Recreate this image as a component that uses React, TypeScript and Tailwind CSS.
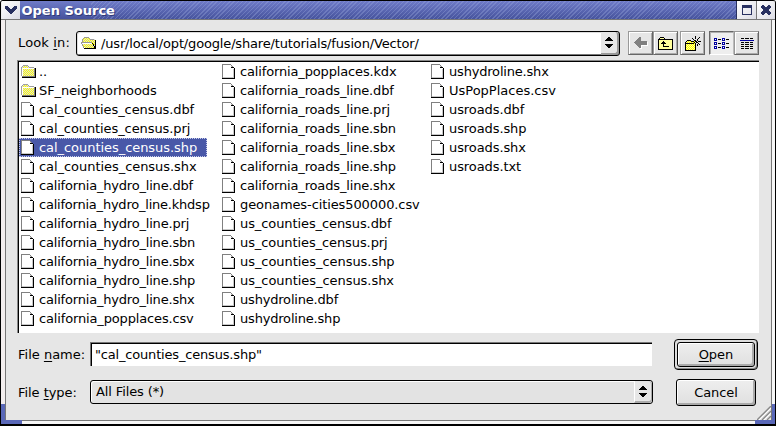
import React from "react";

const columns: string[][] = [
  ["..", "SF_neighborhoods", "cal_counties_census.dbf", "cal_counties_census.prj", "cal_counties_census.shp", "cal_counties_census.shx", "california_hydro_line.dbf", "california_hydro_line.khdsp", "california_hydro_line.prj", "california_hydro_line.sbn", "california_hydro_line.sbx", "california_hydro_line.shp", "california_hydro_line.shx", "california_popplaces.csv"],
  ["california_popplaces.kdx", "california_roads_line.dbf", "california_roads_line.prj", "california_roads_line.sbn", "california_roads_line.sbx", "california_roads_line.shp", "california_roads_line.shx", "geonames-cities500000.csv", "us_counties_census.dbf", "us_counties_census.prj", "us_counties_census.shp", "us_counties_census.shx", "ushydroline.dbf", "ushydroline.shp"],
  ["ushydroline.shx", "UsPopPlaces.csv", "usroads.dbf", "usroads.shp", "usroads.shx", "usroads.txt"],
];
const columnWidths = ["w-[201px]", "w-[209px]", "w-[200px]"];
const folders = ["..", "SF_neighborhoods"];
const selected = "cal_counties_census.shp";

function tracking(name: string) {
  if (name.startsWith("UsPop")) return "tracking-normal";
  if (/census\.sh/.test(name)) return "tracking-[-0.05px]";
  if (/census|SF_|usroads/.test(name)) return "tracking-[-0.09px]";
  if (name.startsWith("geonames")) return "tracking-[-0.1px]";
  if (/roads_line|popplaces/.test(name)) return "tracking-[-0.15px]";
  if (name.endsWith("khdsp")) return "tracking-[-0.22px]";
  return "tracking-[-0.19px]";
}

function Dither({ id, light = "#dcdcdc" }: { id: string; light?: string }) {
  return (
    <pattern id={id} width="2" height="2" patternUnits="userSpaceOnUse">
      <rect width="2" height="2" fill="#ffff00" />
      <rect x="1" width="1" height="1" fill={light} />
      <rect y="1" width="1" height="1" fill={light} />
    </pattern>
  );
}

function Folder({ id }: { id: string }) {
  return (
    <svg width="15" height="13" shapeRendering="crispEdges" className="block shrink-0">
      <defs><Dither id={id} /></defs>
      <path d="M1 2h1V1h5v1h6v9H1z" fill={`url(#${id})`} />
      <path d="M0 2h1v9H0zM1 1h1v1H1zM2 0h5v1H2zM7 1h1v1H7zM8 2h5v1H8z" fill="#a0a0a0" />
      <path d="M1 3h1v8H1zM2 3h11v1H2z" fill="#fff" />
      <path d="M13 3h1v9h-1zM1 11h13v1H1z" fill="#808080" />
      <path d="M14 3h1v10h-1zM1 12h14v1H1z" fill="#000" />
    </svg>
  );
}

function OpenFolder() {
  return (
    <svg width="16" height="13" shapeRendering="crispEdges" className="block shrink-0">
      <defs><Dither id="openf" /></defs>
      <path d="M2 2h1V1h5v1h6v9H4L1 7V5h1z" fill="url(#openf)" />
      <path d="M1 2h1v3H1zM2 1h1v1H2zM3 0h5v1H3zM8 1h1v1H8zM9 2h4v1H9zM0 5h11v1H0zM0 6h1v1H0zM1 7h1v2H1zM2 9h1v2H2z" fill="#999" />
      <path d="M1 6h10v1H1z" fill="#fff" />
      <path d="M14 3h1v9h-1zM3 11h12v1H3zM11 6h1v1h-1zM12 7h1v2h-1zM13 9h1v2h-1z" fill="#000" />
    </svg>
  );
}

function Doc() {
  return (
    <svg width="13" height="15" shapeRendering="crispEdges" className="block shrink-0">
      <path d="M1 1h8v3h3v10H1z" fill="#fff" />
      <path d="M0 0h9v1H0zM0 0h1v14H0zM9 1h1v1H9zM10 2h1v1h-1zM11 3h1v1h-1z" fill="#808080" />
      <path d="M11 5h1v9h-1zM1 13h11v1H1zM9 2h1v1H9z" fill="#c8c8c8" />
      <path d="M9 3h3v1H9zM12 4h1v11h-1zM0 14h13v1H0z" fill="#000" />
    </svg>
  );
}

function Arrows() {
  return (
    <svg width="8" height="11" shapeRendering="crispEdges" className="block">
      <path d="M3 0h2v1H3zM2 1h4v1H2zM1 2h6v1H1zM0 3h8v1H0zM0 7h8v1H0zM1 8h6v1H1zM2 9h4v1H2zM3 10h2v1H3z" />
    </svg>
  );
}

function BackIcon() {
  return (
    <svg width="14" height="12" shapeRendering="crispEdges">
      <path d="M1 6h1v1h1v1h1v1h1v1h1v1h1V8h6V5h1v4H8v3H6v-1H5v-1H4V9H3V8H2V7H1z" fill="#fff" />
      <path d="M0 5h1V4h1V3h1V2h1V1h1V0h2v4h6v4H7v3H5v-1H4V9H3V8H2V7H1V6H0z" fill="#808080" />
    </svg>
  );
}

function ParentIcon() {
  return (
    <svg width="15" height="13" shapeRendering="crispEdges">
      <path d="M1 2h1V1h4v1h8v10H1z" fill="#ffff9c" />
      <path d="M0 2h1v11H0zM1 1h1v1H1zM2 0h4v1H2zM6 1h1v1H6zM7 2h8v1H7zM1 2h6v1H1zM14 3h1v10h-1zM1 12h13v1H1z" />
      <path d="M5 4h1v1H5zM4 5h3v1H4zM3 6h5v1H3zM5 7h1v3H5zM5 9h6v1H5z" />
    </svg>
  );
}

function NewFolderIcon() {
  return (
    <svg width="16" height="15" shapeRendering="crispEdges">
      <defs><Dither id="newf" light="#ffff9c" /></defs>
      <path d="M1 5h9v9H1z" fill="url(#newf)" />
      <path d="M0 6h1v8H0zM1 5h1v1H1zM2 4h4v1H2zM6 5h1v1H6zM1 7h8v1H1zM10 9h1v6h-1zM0 14h11v1H0z" />
      <path d="M10 0h1v3h-1zM7 2h1v1H7zM8 3h1v1H8zM14 1h1v1h-1zM13 2h1v1h-1zM12 3h1v2h-1zM9 4h2v1H9zM6 5h3v1H6zM10 5h2v1h-2zM13 5h3v1h-3zM9 6h1v1H9zM11 6h2v1h-2zM8 7h1v1H8zM10 7h1v2h-1zM13 7h1v1h-1zM14 8h1v1h-1zM12 8h1v2h-1z" />
    </svg>
  );
}

function ListIcon() {
  return (
    <svg width="16" height="11" shapeRendering="crispEdges">
      {[0, 4, 8].map((y) => (
        <g key={y} transform={`translate(0 ${y})`}>
          <path d="M0 0h3v3H0zM8 0h3v3H8z" fill="#0000a0" />
          <path d="M1 1h1v1H1zM9 1h1v1H9z" fill="#fff" />
          <path d="M4 1h3v1H4zM12 1h3v1h-3z" />
        </g>
      ))}
    </svg>
  );
}

function DetailIcon() {
  return (
    <svg width="14" height="11" shapeRendering="crispEdges">
      <path d="M1 0h3v1H1zM5 0h4v1H5zM10 0h3v1h-3z" />
      <path d="M0 2h14v1H0z" fill="#0000a0" />
      {[4, 6, 8, 10].map((y) => <path key={y} transform={`translate(0 ${y})`} d="M1 0h3v1H1zM5 0h4v1H5zM10 0h3v1h-3z" />)}
    </svg>
  );
}

function Tool({ children, pressed = false }: { children: React.ReactNode; pressed?: boolean }) {
  return (
    <div className={`flex h-6 w-[25px] items-center justify-center border ${pressed ? "border-t-[#666] border-l-[#666] border-r-[#bbb] border-b-white bg-[#eeeeee] shadow-[inset_1px_1px_0_#b0b0b0]" : "border-t-[#999] border-l-[#999] border-r-[#666] border-b-[#666] bg-[#e6e6e6] shadow-[inset_1px_1px_0_#fff,inset_-1px_-1px_0_#aaa]"}`}>
      {children}
    </div>
  );
}

function Row({ name, index }: { name: string; index: number }) {
  const active = name === selected;
  const isFolder = folders.includes(name);
  return (
    <div className={`flex h-[19px] items-center pl-0.5 ${active ? "w-[188px] bg-[#4958a8] text-white outline-1 -outline-offset-1 outline-dotted outline-[#c8ccea]" : "w-fit"}`}>
      <div className="w-[18px]">{isFolder ? <Folder id={`folder${index}`} /> : <Doc />}</div>
      <span className={tracking(name)}>{name}</span>
    </div>
  );
}

function TitleButton({ children }: { children: React.ReactNode }) {
  return <div className="flex h-[18px] items-center justify-center bg-linear-to-br from-white to-[#dcdce4]">{children}</div>;
}

export default function App() {
  return (
    <div className="relative flex h-[426px] w-[776px] flex-col overflow-hidden rounded-t-[3px] border border-b-2 border-black bg-[#e6e6e6] font-['DejaVu_Sans',sans-serif] text-[13px] leading-[19px] text-black">
      <header className="flex h-[19px] shrink-0 border-b border-[#777] bg-[#eee]">
        <div className="w-[19px] pl-px">
          <TitleButton>
            <svg width="12" height="8" shapeRendering="crispEdges"><path d="M0 0h3v1h1v1h1v1h2V2h1V1h1V0h3v3h-1v1h-1v1H9v1H8v1H7v1H5V7H4V6H3V5H2V4H1V3H0z" fill="#283060" /></svg>
          </TitleButton>
        </div>
        <div className="flex flex-1 bg-linear-to-b from-[#6f7bc8] to-[#46539d] pl-[1.5px]">
          <span className="z-10 font-bold leading-[19px] text-white [text-shadow:1px_1px_0_#303a78]">Open Source</span>
          <div className="-ml-6 flex-1 bg-[repeating-linear-gradient(135deg,transparent_0px,transparent_2px,#9eacde55_2px,#9eacde55_3px)]" />
        </div>
        <div className="w-[39px] border-l border-[#283060] bg-[#777]">
          <div className="grid grid-cols-[19px_18px] gap-px">
            <TitleButton>
              <svg width="10" height="10" shapeRendering="crispEdges"><path fillRule="evenodd" d="M0 0h10v10H0zM1 3v6h8V3z" fill="#283060" /></svg>
            </TitleButton>
            <TitleButton>
              <svg width="10" height="10" shapeRendering="crispEdges"><path d="M1 0h2v1h1v1h2V1h1V0h2v1h1v2H9v1H8v2h1v1h1v2H9v1H7V9H6V8H4v1H3v1H1V9H0V7h1V6h1V4H1V3H0V1h1z" fill="#283060" /></svg>
            </TitleButton>
          </div>
        </div>
      </header>

      <div className="flex flex-1">
        <div className="flex w-[5px] flex-col border-r border-[#777] bg-[#f3eeee]">
          <div className="mt-auto h-4 bg-[#5a68b8]" />
        </div>

        <main className="flex h-[400px] w-[765px] flex-col pl-3 pt-[11px]">
          <div className="flex h-6">
            <span className="w-[58px] pt-0.5 tracking-[0.15px]">Look <span className="underline underline-offset-2">i</span>n:</span>
            <div className="flex h-[25px] w-[544px] items-center rounded-[3px] border border-black bg-white shadow-[inset_1px_1px_0_#ddd,inset_-1px_-1px_0_#777]">
              <span className="pl-1"><OpenFolder /></span>
              <span className="flex-1 pl-[4px] tracking-[-0.16px]">/usr/local/opt/google/share/tutorials/fusion/Vector/</span>
              <div className="flex h-[23px] w-[18px] items-center justify-center rounded-r-sm border-r-2 border-b-2 border-[#999] bg-[#e6e6e6]"><Arrows /></div>
            </div>
            <div className="ml-2 flex">
              <Tool><BackIcon /></Tool><Tool><ParentIcon /></Tool>
              <div className="ml-0.5"><Tool><NewFolderIcon /></Tool></div>
              <div className="ml-1 flex"><Tool pressed><ListIcon /></Tool><Tool><DetailIcon /></Tool></div>
            </div>
          </div>

          <div className="mt-[5px] h-[273px] w-[742px] -ml-px border-l border-t border-[#888] bg-white">
            <div className="flex h-[272px] border-l border-t border-black">
              {columns.map((files, i) => (
                <div key={i} className={`${columnWidths[i]} shrink-0 whitespace-nowrap`}>
                  {files.map((name, j) => <Row key={name} name={name} index={j} />)}
                </div>
              ))}
            </div>
          </div>

          <div className="mt-[6px] flex h-[31px]">
            <span className="w-[72px] pt-[6px]">File <span className="underline underline-offset-2">n</span>ame:</span>
            <div className="mt-[3px] h-6 w-[562px] border-l border-t border-[#777] bg-white">
              <div className="h-[23px] border-l border-t border-black pl-[3px] leading-[21px] tracking-[-0.18px]">&quot;cal_counties_census.shp&quot;</div>
            </div>
            <div className="ml-[22px] h-[31px] w-[84px] rounded-[4px] border border-black bg-[#ddd] p-0.5 shadow-[inset_-1px_-1px_0_#888]">
              <div className="h-[25px] w-[78px] rounded-[3px] border border-black bg-linear-to-b from-[#eee] to-[#e0e0e0] text-center leading-[23px] shadow-[inset_1px_1px_0_#fff,inset_-2px_-2px_0_#aaa]"><span className="underline underline-offset-2">O</span>pen</div>
            </div>
          </div>

          <div className="mt-[9px] flex h-[27px]">
            <span className="w-[72px] pt-[4px] tracking-[-0.05px]">File <span className="underline underline-offset-2">t</span>ype:</span>
            <div className="mt-px flex h-6 w-[563px] items-center justify-between rounded-[3px] border border-black bg-[#e3e3e3] pl-[5px] shadow-[inset_1px_1px_0_#fff]">
              <span className="h-[21px] tracking-[-0.12px]">All Files (*)</span>
              <div className="flex h-[22px] w-[18px] items-center justify-center rounded-r-sm border-b-2 border-l border-r border-[#aaa] border-l-white bg-[#e6e6e6]"><Arrows /></div>
            </div>
            <div className="ml-[23px] h-[27px] w-[80px] rounded-[3px] border border-black bg-linear-to-b from-[#eee] to-[#e0e0e0] text-center leading-[25px] tracking-[-0.1px] shadow-[inset_1px_1px_0_#fff,inset_-2px_-2px_0_#aaa]">Cancel</div>
          </div>
        </main>

        <div className="flex w-1 flex-col border-l border-[#777] bg-[#f6f6f6]">
          <div className="mt-auto h-4 bg-[#5a68b8]" />
        </div>
      </div>
      <footer className="flex h-1 shrink-0 justify-between bg-[#5a68b8] pl-[21px] pr-[20px]">
        <div className="flex-1 border-t border-[#777] bg-[#f6f6f6]" />
      </footer>
      <svg width="14" height="14" className="absolute bottom-1 right-[4px]">
        <path d="M0 14L14 0M5 14L14 5M10 14L14 10" stroke="#888" strokeWidth="1.3" />
        <path d="M2 14L14 2M7 14L14 7" stroke="#fff" />
      </svg>
    </div>
  );
}
